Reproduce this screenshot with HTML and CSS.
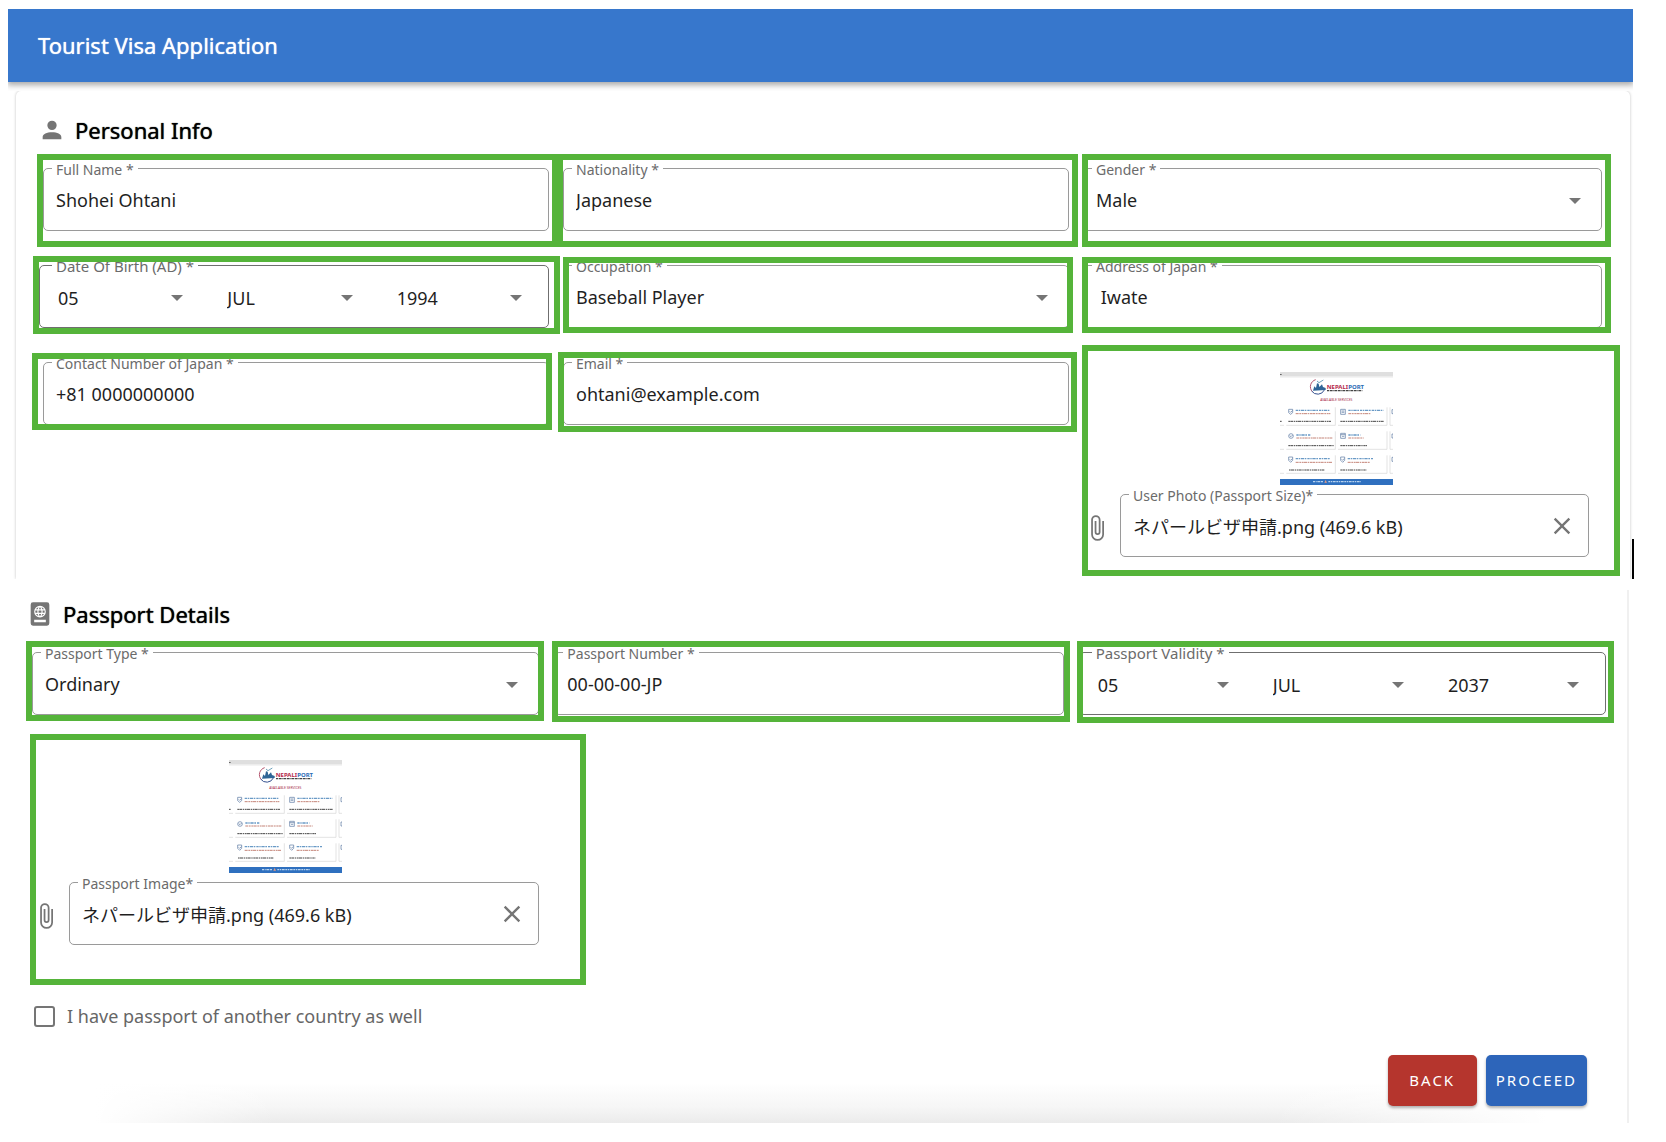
FILE: index.html
```html
<!DOCTYPE html>
<html lang="en">
<head>
<meta charset="utf-8">
<meta name="viewport" content="width=device-width, initial-scale=1">
<title>Tourist Visa Application</title>
<link rel="stylesheet" href="styles.css">
</head>
<body>
<svg class="sprite" aria-hidden="true">
  <symbol id="i-account" viewBox="0 0 24 24"><path d="M12,4A4,4 0 0,1 16,8A4,4 0 0,1 12,12A4,4 0 0,1 8,8A4,4 0 0,1 12,4M12,14C16.42,14 20,15.79 20,18V20H4V18C4,15.79 7.58,14 12,14Z"/></symbol>
  <symbol id="i-passport" viewBox="0 0 24 24"><path d="M6,2A2,2 0 0,0 4,4V20A2,2 0 0,0 6,22H18A2,2 0 0,0 20,20V4A2,2 0 0,0 18,2H6M12,5A5,5 0 0,1 17,10A5,5 0 0,1 12,15A5,5 0 0,1 7,10A5,5 0 0,1 12,5M12,6C11.59,6.62 11.25,7.29 11.04,8H12.96C12.75,7.29 12.42,6.62 12,6M10.7,6.22C9.78,6.53 9,7.17 8.54,8H10C10.18,7.38 10.4,6.78 10.7,6.22M13.29,6.22C13.59,6.78 13.82,7.38 14,8H15.46C15,7.17 14.21,6.54 13.29,6.22M8.13,9C8.05,9.32 8,9.65 8,10C8,10.35 8.05,10.68 8.13,11H9.82C9.78,10.67 9.75,10.34 9.75,10C9.75,9.66 9.78,9.32 9.82,9H8.13M10.83,9C10.78,9.32 10.75,9.66 10.75,10C10.75,10.34 10.78,10.67 10.83,11H13.17C13.21,10.67 13.25,10.34 13.25,10C13.25,9.66 13.21,9.32 13.17,9H10.83M14.18,9C14.22,9.32 14.25,9.66 14.25,10C14.25,10.34 14.22,10.67 14.18,11H15.87C15.95,10.68 16,10.35 16,10C16,9.65 15.95,9.32 15.87,9H14.18M8.54,12C9,12.83 9.78,13.46 10.7,13.78C10.4,13.22 10.18,12.63 10,12H8.54M11.04,12C11.25,12.72 11.59,13.38 12,14C12.42,13.38 12.75,12.72 12.96,12H11.04M14,12C13.82,12.63 13.59,13.22 13.29,13.78C14.21,13.46 15,12.83 15.46,12H14M7,17H17V19H7V17Z"/></symbol>
  <symbol id="i-clip" viewBox="0 0 24 24"><path d="M16.5,6V17.5A4,4 0 0,1 12.5,21.5A4,4 0 0,1 8.5,17.5V5A2.5,2.5 0 0,1 11,2.5A2.5,2.5 0 0,1 13.5,5V15.5A1,1 0 0,1 12.5,16.5A1,1 0 0,1 11.5,15.5V6H10V15.5A2.5,2.5 0 0,0 12.5,18A2.5,2.5 0 0,0 15,15.5V5A4,4 0 0,0 11,1A4,4 0 0,0 7,5V17.5A5.5,5.5 0 0,0 12.5,23A5.5,5.5 0 0,0 18,17.5V6H16.5Z"/></symbol>
  <symbol id="i-close" viewBox="0 0 24 24"><path d="M19,6.41L17.59,5L12,10.59L6.41,5L5,6.41L10.59,12L5,17.59L6.41,19L12,13.41L17.59,19L19,17.59L13.41,12L19,6.41Z"/></symbol>
  <symbol id="site-preview" viewBox="27 37 339 339">
    <rect x="27" y="37" width="339" height="339" fill="#fff"/>
    <rect x="27" y="37" width="339" height="14" fill="#dfdfdf"/>
    <rect x="27" y="51" width="339" height="4" fill="#f4f4f4"/>
    <rect x="27" y="43" width="5" height="3" fill="#666"/>
    <g fill="none" stroke-width="3">
      <path d="M134 60A22 22 0 0 0 124 96" stroke="#b5566f"/>
      <path d="M122 94A22 22 0 0 0 160 91" stroke="#33508f"/>
      <path d="M138 64l6 5 13-8" stroke="#6fa3bd"/>
    </g>
    <path d="M126 93l4-13 5 5 3-14 5 1 2 10 8-8 3 8 8 3v6z" fill="#2f6596"/>
    <text x="167" y="87" font-size="18" font-weight="700" fill="#b5294b">NEPALI<tspan fill="#2b6cb5">PORT</tspan></text>
    <path d="M168 93H274" stroke="#444" stroke-width="4" stroke-dasharray="6 2 9 2 4 1"/>
    <text x="196" y="125" font-size="10" text-anchor="middle" fill="#a8284c">AVAILABLE SERVICES</text>
    <g fill="none" stroke="#d4d4d4" stroke-width="2">
      <path d="M27 197h12M46 197h147v-54M201 197h147v-54M357 143v54h9M27 269h12M46 269h147v-54M201 269h147v-54M357 215v54h9M27 341h12M46 341h147v-54M201 341h147v-54M357 287v54h9"/>
    </g>
    <g fill="none" stroke="#55729f" stroke-width="2">
      <path d="M53 149h12v10l-6 5-6-5zM56 155l3 3 5-5M209 149h14v15h-14zM212 154h8M212 158h8"/>
      <circle cx="60" cy="229" r="7"/><path d="M56 228l4 3 5-5M209 221h14v15h-14zM209 225h14M213 230h7"/>
      <path d="M53 292h12v10l-6 6-6-6zM56 299l3 3 5-5M209 292h12v10l-6 6-6-6zM212 299l3 3 4-5M366 150h-3v12h3M366 223h-3v12h3M366 293h-3v12h3"/>
    </g>
    <g stroke="#6a9ac6" stroke-width="4" stroke-dasharray="7 2 4 2 10 2 5 3">
      <path d="M74 152H175M232 152H338M76 226H120M232 226H268M74 297H178M230 297H306"/>
    </g>
    <g stroke="#c48478" stroke-width="3" stroke-dasharray="9 2 5 2 6 1">
      <path d="M74 162H178M232 162H298M76 235H184M232 235H278M74 308H184M230 308H298"/>
    </g>
    <g stroke="#444" stroke-width="3" stroke-dasharray="5 1 9 2 4 2">
      <path d="M27 185h5M52 185H180M208 185H338M52 258H188M208 258H288M54 331H160M208 331H286"/>
    </g>
    <rect x="27" y="358" width="339" height="18" fill="#2f70bf"/>
    <path d="M126 366H156M172 366H270" stroke="#b7d2ee" stroke-width="4" stroke-dasharray="6 2 3 2 9 2"/>
    <path d="M160 369l4-8 4 8z" fill="#e99b80"/>
  </symbol>
</svg>

<div class="app">
  <header class="topbar"><h1>Tourist Visa Application</h1></header>

  <form>
    <section class="panel personal" aria-labelledby="h-personal">
      <h2 id="h-personal"><svg class="icon"><use href="#i-account"/></svg>Personal Info</h2>
      <div class="grid">
        <div class="cell mark m-name">
          <div class="field"><label for="name">Full Name *</label><input id="name" type="text" value="Shohei Ohtani"></div>
        </div>
        <div class="cell mark m-name">
          <div class="field"><label for="nationality">Nationality *</label><input id="nationality" type="text" value="Japanese"></div>
        </div>
        <div class="cell mark m-gender">
          <div class="field"><label for="gender">Gender *</label><div class="pick"><select id="gender"><option>Male</option></select></div></div>
        </div>
        <div class="cell mark m-birth">
          <div class="field dates" role="group" aria-labelledby="birth-label">
            <span class="caption" id="birth-label">Date Of Birth (AD) *</span>
            <div class="pick"><select aria-label="Day of birth"><option>05</option></select></div>
            <div class="pick"><select aria-label="Month of birth"><option>JUL</option></select></div>
            <div class="pick"><select aria-label="Year of birth"><option>1994</option></select></div>
          </div>
        </div>
        <div class="cell mark m-job">
          <div class="field"><label for="job">Occupation *</label><div class="pick"><select id="job"><option>Baseball Player</option></select></div></div>
        </div>
        <div class="cell mark m-address">
          <div class="field"><label for="address">Address of Japan *</label><input id="address" type="text" value=" Iwate"></div>
        </div>
        <div class="cell mark m-contact">
          <div class="field"><label for="contact">Contact Number of Japan *</label><input id="contact" type="tel" value="+81 0000000000"></div>
        </div>
        <div class="cell mark m-email">
          <div class="field"><label for="email">Email *</label><input id="email" type="email" value="ohtani@example.com"></div>
        </div>
        <div class="cell upload inset mark m-photo">
          <svg class="preview" role="img" aria-label="User photo preview"><use href="#site-preview"/></svg>
          <div class="upload-row">
            <svg class="icon"><use href="#i-clip"/></svg>
            <div class="field"><label for="photo">User Photo (Passport Size)*</label><input id="photo" type="text" readonly value="ネパールビザ申請.png (469.6 kB)"><button class="clear" type="button" aria-label="Clear user photo"><svg class="icon"><use href="#i-close"/></svg></button></div>
          </div>
        </div>
      </div>
      <span class="caret"></span>
    </section>

    <section class="panel passport" aria-labelledby="h-passport">
      <h2 id="h-passport"><svg class="icon"><use href="#i-passport"/></svg>Passport Details</h2>
      <div class="grid">
        <div class="cell mark m-type">
          <div class="field"><label for="type">Passport Type *</label><div class="pick"><select id="type"><option>Ordinary</option></select></div></div>
        </div>
        <div class="cell mark m-number">
          <div class="field"><label for="number">Passport Number *</label><input id="number" type="text" value="00-00-00-JP"></div>
        </div>
        <div class="cell mark m-valid">
          <div class="field dates" role="group" aria-labelledby="valid-label">
            <span class="caption" id="valid-label">Passport Validity *</span>
            <div class="pick"><select aria-label="Validity day"><option>05</option></select></div>
            <div class="pick"><select aria-label="Validity month"><option>JUL</option></select></div>
            <div class="pick"><select aria-label="Validity year"><option>2037</option></select></div>
          </div>
        </div>
        <div class="cell upload mark m-image">
          <svg class="preview" role="img" aria-label="Passport image preview"><use href="#site-preview"/></svg>
          <div class="upload-row">
            <svg class="icon"><use href="#i-clip"/></svg>
            <div class="field"><label for="image">Passport Image*</label><input id="image" type="text" readonly value="ネパールビザ申請.png (469.6 kB)"><button class="clear" type="button" aria-label="Clear passport image"><svg class="icon"><use href="#i-close"/></svg></button></div>
          </div>
        </div>
      </div>
      <label class="check"><input type="checkbox">I have passport of another country as well</label>
      <div class="actions">
        <button class="btn back" type="button">BACK</button>
        <button class="btn proceed" type="submit">PROCEED</button>
      </div>
    </section>
  </form>
</div>
</body>
</html>
```
FILE: styles.css
```css
:root {
  --blue: #3777cc;
  --green: #55b43a;
  --line: #9a9a9a;
  --muted: #757575;
}

* { box-sizing: border-box; }

body {
  margin: 0;
  background: #fff;
  color: #1f1f1f;
  font: 18px/24px "Noto Sans", "Noto Sans CJK JP", sans-serif;
}

input, select, button { font: inherit; color: inherit; }

.sprite { position: absolute; width: 0; height: 0; }
.icon { flex: none; display: block; width: 28px; height: 28px; fill: var(--muted); }

.app { margin: 0 33px 0 8px; padding-top: 9px; }

.topbar {
  display: flex;
  align-items: center;
  min-height: 73px;
  padding: 0 30px 1px;
  background: var(--blue);
  color: #fff;
  box-shadow: 0 2px 6px 1px rgba(0, 0, 0, .35);
  clip-path: inset(0 0 -9px 0);
}

h1, h2 {
  margin: 0;
  font-size: 22px;
  line-height: 30px;
  font-weight: 400;
  text-shadow: 0 0 1px currentColor;
}

.panel { position: relative; background: #fff; }

.personal {
  margin: 9px 3px 0 8px;
  padding: 24px 28px 22px 27px;
  border-radius: 5px 5px 0 0;
  box-shadow: 0 0 3px rgba(0, 0, 0, .25);
  clip-path: inset(0 -6px);
}

.passport {
  margin: 11px 4px 0 8px;
  padding: 9px 21px 17px 16px;
  border-right: 2px solid #f0f0f0;
  background:
    linear-gradient(to right, #fff 80px, transparent 260px, transparent 78%, #fff 95%) bottom / 100% 40px no-repeat,
    linear-gradient(to top, #ebebeb, #f6f6f6 40%, #fff) bottom / 100% 40px no-repeat;
}

h2 {
  display: flex;
  align-items: center;
  gap: 9px;
  margin: 0 0 23px -5px;
  color: #000;
}
.passport h2 { margin-left: -6px; }

.grid { display: grid; gap: 34px 14px; align-items: start; }
.personal .grid { grid-template-columns: minmax(0, 506fr) minmax(0, 506fr) minmax(0, 519fr); }
.passport .grid { grid-template-columns: minmax(0, 507fr) minmax(0, 509fr) minmax(0, 527fr); column-gap: 15px; }

.cell { position: relative; }

.field {
  position: relative;
  display: flex;
  align-items: center;
  flex: 1;
  min-width: 0;
  height: 63px;
  border: 1px solid var(--line);
  border-radius: 5px;
}

.field > label, .caption {
  position: absolute;
  top: -8px;
  left: 8px;
  padding: 0 4px;
  background: #fff;
  color: #6b6b6b;
  font-size: 14px;
  line-height: 18px;
  white-space: nowrap;
}

.field input, .field select {
  appearance: none;
  width: 100%;
  min-width: 0;
  height: 40px;
  margin: 0;
  padding: 0 12px;
  border: 0;
  outline: 0;
  background: transparent;
}

.pick { display: grid; flex: 1; align-items: center; min-width: 0; }
.pick select, .pick::after { grid-area: 1 / 1; }
.pick::after {
  content: "";
  justify-self: end;
  margin: 2px 20px 0 0;
  border: 6px solid transparent;
  border-top-color: var(--muted);
  border-bottom: 0;
  pointer-events: none;
}

.dates { padding-top: 2px; border-color: #6f6f6f; }
.dates .caption { top: -9px; left: 12px; font-size: 15px; }
.dates select { padding-left: 18px; }
.dates .pick::after { margin: 0 26px 0 0; }

.upload { padding-top: 10px; }
.upload.inset { padding-right: 13px; }
.passport .upload { padding-top: 11px; }
.preview { display: block; width: 113px; height: 113px; margin: 0 auto 9px; }
.upload-row { display: flex; align-items: center; gap: 9px; }
.upload-row > .icon { margin-top: 4px; }
.clear { margin: 0 12px 0 0; padding: 0; border: 0; background: none; cursor: pointer; }

/* Green highlight frames drawn over the fields */
.mark::after {
  content: "";
  position: absolute;
  z-index: 1;
  border: 6px solid var(--green);
  pointer-events: none;
}
.m-name::after { inset: -14px -9px -16px -6px; }
.m-gender::after { inset: -14px -9px -16px -1px; }
.m-birth { margin-left: -4px; }
.m-birth::after { inset: -9px -11px -6px -6px; }
.m-job::after { inset: -8px -4px -5px 0; }
.m-address::after { inset: -8px -9px -5px -1px; }
.m-contact::after { inset: -9px -3px -5px -11px; }
.m-email::after { inset: -10px -8px -7px -5px; }
.m-photo::after { inset: -17px -18px -19px -1px; }
.m-type::after { inset: -11px -5px -6px -6px; }
.m-number::after { inset: -11px -6px -7px -2px; }
.m-valid::after { inset: -11px -8px -8px -2px; }
.m-image::after { inset: -15px -47px -40px -2px; }

.caret {
  position: absolute;
  right: -4px;
  bottom: 0;
  width: 2px;
  height: 40px;
  background: #000;
}

.check {
  display: inline-flex;
  align-items: center;
  gap: 12px;
  margin: 56px 0 0 2px;
  line-height: 30px;
  color: #666;
}
.check input {
  appearance: none;
  width: 21px;
  height: 21px;
  margin: 0;
  border: 2px solid var(--muted);
  border-radius: 3px;
}
.check input:checked { background: var(--blue); }

.actions { display: flex; justify-content: flex-end; gap: 9px; margin: 23px 19px 0 0; }
.btn {
  min-width: 89px;
  height: 51px;
  padding: 0 10px;
  border: 0;
  border-radius: 5px;
  color: #fff;
  font-size: 15px;
  letter-spacing: 2px;
  box-shadow: 0 2px 3px rgba(0, 0, 0, .3);
  cursor: pointer;
}
.back { background: #b5352d; }
.proceed { background: #2d65ba; }
```
